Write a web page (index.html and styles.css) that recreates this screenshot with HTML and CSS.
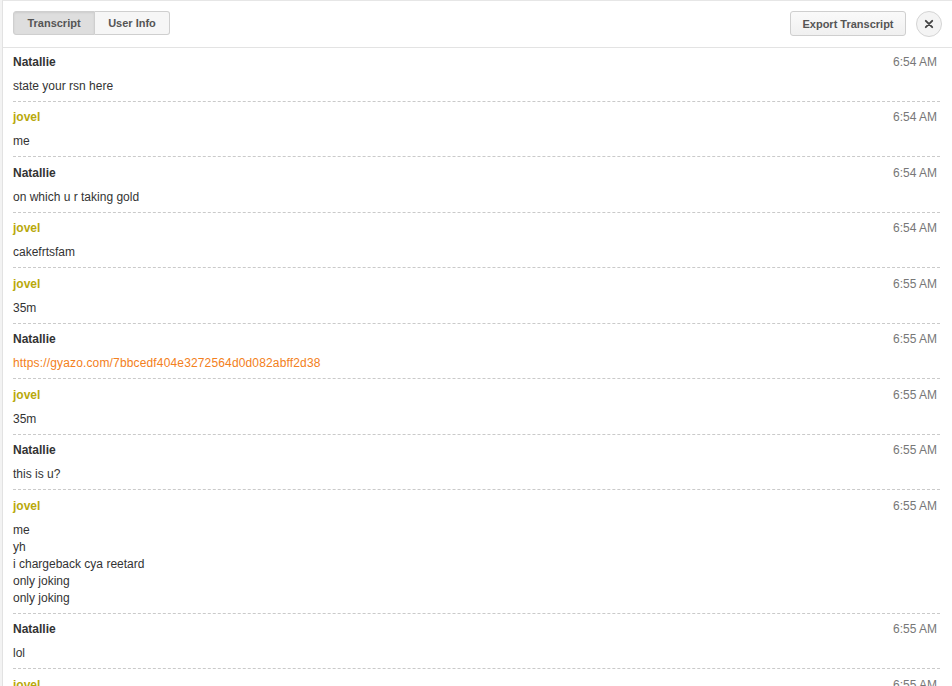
FILE: index.html
```html
<!DOCTYPE html>
<html>
<head>
<meta charset="utf-8">
<link rel="stylesheet" href="styles.css">
</head>
<body>
<div class="edge"></div>
<div class="panel">
  <div class="header">
    <div class="tabs">
      <button class="tab active">Transcript</button>
      <button class="tab">User Info</button>
    </div>
    <div class="actions">
      <button class="export">Export Transcript</button>
      <button class="close" aria-label="Close">
        <svg width="10" height="10" viewBox="0 0 10 10"><path d="M1.8 1.8 L8.2 8.2 M8.2 1.8 L1.8 8.2" stroke="#444" stroke-width="1.9" stroke-linecap="round"/></svg>
      </button>
    </div>
  </div>
  <div class="log">
    <div class="msg"><div class="meta"><span class="name agent">Natallie</span><span class="time">6:54 AM</span></div><div class="text">state your rsn here</div></div>
    <div class="msg"><div class="meta"><span class="name visitor">jovel</span><span class="time">6:54 AM</span></div><div class="text">me</div></div>
    <div class="msg"><div class="meta"><span class="name agent">Natallie</span><span class="time">6:54 AM</span></div><div class="text">on which u r taking gold</div></div>
    <div class="msg"><div class="meta"><span class="name visitor">jovel</span><span class="time">6:54 AM</span></div><div class="text">cakefrtsfam</div></div>
    <div class="msg"><div class="meta"><span class="name visitor">jovel</span><span class="time">6:55 AM</span></div><div class="text">35m</div></div>
    <div class="msg"><div class="meta"><span class="name agent">Natallie</span><span class="time">6:55 AM</span></div><div class="text"><a class="link" href="#">https://gyazo.com/7bbcedf404e3272564d0d082abff2d38</a></div></div>
    <div class="msg"><div class="meta"><span class="name visitor">jovel</span><span class="time">6:55 AM</span></div><div class="text">35m</div></div>
    <div class="msg"><div class="meta"><span class="name agent">Natallie</span><span class="time">6:55 AM</span></div><div class="text">this is u?</div></div>
    <div class="msg"><div class="meta"><span class="name visitor">jovel</span><span class="time">6:55 AM</span></div><div class="text">me<br>yh<br>i chargeback cya reetard<br>only joking<br>only joking</div></div>
    <div class="msg"><div class="meta"><span class="name agent">Natallie</span><span class="time">6:55 AM</span></div><div class="text">lol</div></div>
    <div class="msg"><div class="meta"><span class="name visitor">jovel</span><span class="time">6:55 AM</span></div><div class="text">ok</div></div>
  </div>
</div>
</body>
</html>
```
FILE: styles.css
```css
* { box-sizing: border-box; }
html, body {
  margin: 0;
  padding: 0;
  height: 100%;
  overflow: hidden;
  background: #fff;
  font-family: "Liberation Sans", Arial, sans-serif;
  font-size: 12px;
  color: #333;
}
body {
  display: flex;
}
.edge {
  width: 2px;
  flex: none;
  background: #f3f3f3;
}
.panel {
  flex: 1;
  border-left: 1px solid #e2e2e2;
  border-top: 1px solid #e6e6e6;
  min-width: 0;
}
.header {
  height: 47px;
  border-bottom: 1px solid #e3e3e3;
  display: flex;
  align-items: flex-start;
  justify-content: space-between;
  padding: 10px 10px 0 10px;
}
.tabs {
  display: flex;
}
.tab {
  font-family: "Liberation Sans", Arial, sans-serif;
  font-size: 11px;
  font-weight: bold;
  color: #555;
  height: 24px;
  border: 1px solid #cfcfcf;
  background: #f6f6f6;
  margin: 0;
  padding: 0;
  cursor: pointer;
}
.tab:first-child {
  border-radius: 3px 0 0 3px;
  width: 82px;
}
.tab:last-child {
  border-radius: 0 3px 3px 0;
  border-left: none;
  width: 75px;
}
.tab.active {
  background: #dedede;
  box-shadow: inset 0 1px 2px rgba(0,0,0,0.08);
}
.actions {
  display: flex;
  align-items: flex-start;
  gap: 10px;
}
.export {
  font-family: "Liberation Sans", Arial, sans-serif;
  font-size: 11px;
  font-weight: bold;
  color: #555;
  height: 25px;
  width: 116px;
  padding: 0;
  border: 1px solid #cfcfcf;
  border-radius: 3px;
  background: linear-gradient(#fafafa, #f0f0f0);
}
.close {
  width: 26px;
  height: 26px;
  border-radius: 50%;
  border: 1px solid #d4d4d4;
  background: #f4f4f4;
  padding: 0;
  display: flex;
  align-items: center;
  justify-content: center;
}
.log {
  padding: 0 12px 0 10px;
}
.msg {
  padding: 7.5px 0 6px;
  border-bottom: 1px dashed #cacaca;
}
.msg:first-child {
  padding-top: 5.5px;
}
.meta {
  display: flex;
  justify-content: space-between;
  line-height: 17px;
  margin-bottom: 7px;
}
.name {
  font-weight: bold;
}
.name.agent { color: #333; }
.name.visitor { color: #b8a90c; }
.time {
  color: #777;
  padding-right: 3px;
}
.text {
  line-height: 17px;
  color: #333;
}
.link {
  color: #f38020;
  text-decoration: none;
  letter-spacing: 0.15px;
}
```
